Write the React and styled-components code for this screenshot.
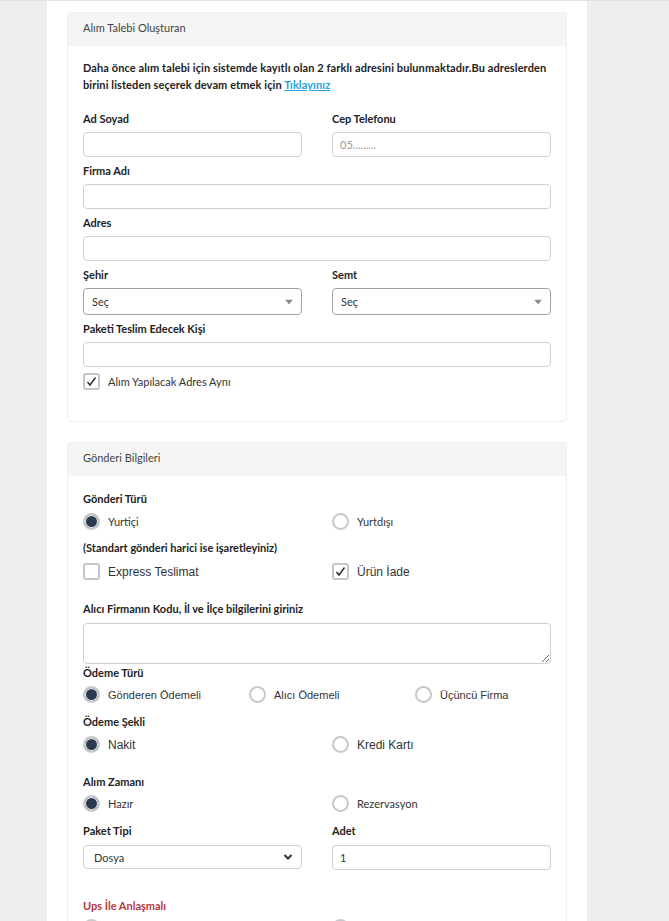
import React from "react";
import styled, { createGlobalStyle } from "styled-components";

const GlobalStyle = createGlobalStyle`
  html, body {
    margin: 0;
    padding: 0;
    overflow: hidden;
    background: #eeeeee;
  }
  body {
    font-family: Lato, "Open Sans", sans-serif;
    color: #333;
  }
  * { box-sizing: border-box; }
`;

const Page = styled.div`
  height: 921px;
  border-top: 1px solid #e2e2e2;
`;

const Column = styled.main`
  width: 540px;
  height: 100%;
  margin-left: 47px;
  background: #fff;
  padding: 11px 20px 0;
`;

const Panel = styled.section`
  border: 1px solid #efefef;
  border-radius: 3px;
  margin-bottom: 20px;
`;

const PanelHeading = styled.div`
  height: 33px;
  line-height: 30px;
  padding: 0 15px 3px;
  background: #f5f5f5;
  font-size: 11px;
  color: #444;
  border-radius: 3px 3px 0 0;
`;

const PanelBody = styled.div`
  padding: ${p => p.$top ?? 14}px 15px ${p => p.$bottom ?? 30}px;
`;

const Intro = styled.p`
  margin: 0 0 17px;
  font-size: 11px;
  font-weight: 700;
  line-height: 17px;
  letter-spacing: 0.1px;
  color: #222;
`;

const Link = styled.a`
  color: #2a9fd6;
  text-decoration: underline;
  cursor: pointer;
`;

const Label = styled.label`
  display: block;
  font-size: 11px;
  font-weight: 700;
  line-height: 18px;
  margin-top: ${p => p.$mt || 0}px;
  margin-bottom: ${p => p.$mb ?? 4}px;
  color: ${p => (p.$red ? "#b5373b" : "#222")};
`;

const Grid = styled.div`
  display: grid;
  grid-template-columns: repeat(${p => p.$cols || 2}, 1fr);
  column-gap: 30px;
`;

const Field = styled.div`
  margin-bottom: ${p => p.$mb ?? 5}px;
`;

const TextInput = styled.input`
  display: block;
  width: 100%;
  height: 25px;
  padding: 0 7px;
  border: 1px solid #cfcfcf;
  border-radius: 4px;
  font-family: Lato, sans-serif;
  font-size: 11px;
  color: #333;
  outline: none;
  &::placeholder { color: #9a9a9a; }
`;

const TextArea = styled.textarea`
  display: block;
  width: 100%;
  height: 41px;
  border: 1px solid #cfcfcf;
  border-radius: 4px;
  outline: none;
  resize: vertical;
`;

const SelectBox = styled.div`
  position: relative;
  height: ${p => (p.$plain ? 24 : 27)}px;
  border: 1px solid ${p => (p.$plain ? "#cfcfcf" : "#a3a3a3")};
  border-radius: 4px;
  padding-left: ${p => (p.$plain ? 10 : 8)}px;
  display: flex;
  align-items: center;
  font-size: 11px;
  color: #333;
`;

const Caret = styled.span`
  position: absolute;
  right: 8px;
  top: 50%;
  transform: translateY(-50%);
  display: flex;
`;

const Option = styled.label`
  display: flex;
  align-items: center;
  gap: 8px;
  height: 17px;
  font-family: ${p => (p.$arial ? '"Liberation Sans", Arial, sans-serif' : "Lato, sans-serif")};
  font-size: ${p => p.$size || 11}px;
  color: #333;
`;

const RadioDot = styled.span`
  flex: none;
  width: 17px;
  height: 17px;
  border-radius: 50%;
  border: 2px solid #c6c8cb;
  background: ${p => (p.$on ? "#2b3a4e" : "#fff")};
  box-shadow: ${p => (p.$on ? "inset 0 0 0 1px #fff" : "none")};
`;

const CheckBox = styled.span`
  flex: none;
  width: 17px;
  height: 17px;
  border-radius: 3px;
  border: 2px solid #c4c6c9;
  background: #fff;
  display: flex;
  align-items: center;
  justify-content: center;
`;

const Tick = () => (
  <svg width="11" height="11" viewBox="0 0 11 11">
    <polyline points="1.5,6 4,9 9.5,1.5" fill="none" stroke="#2b2b2b" strokeWidth="1.5" />
  </svg>
);

const Radio = ({ on, children, ...rest }) => (
  <Option {...rest}>
    <RadioDot $on={on} />
    {children}
  </Option>
);

const Check = ({ on, children, ...rest }) => (
  <Option {...rest}>
    <CheckBox>{on && <Tick />}</CheckBox>
    {children}
  </Option>
);

const Select = ({ value, plain }) => (
  <SelectBox $plain={plain}>
    {value}
    <Caret>
      {plain ? (
        <svg width="10" height="7" viewBox="0 0 10 7">
          <polyline points="1.5,1.5 5,5 8.5,1.5" fill="none" stroke="#333" strokeWidth="2" />
        </svg>
      ) : (
        <svg width="8" height="5" viewBox="0 0 8 5">
          <polygon points="0,0 8,0 4,5" fill="#8a8a8a" />
        </svg>
      )}
    </Caret>
  </SelectBox>
);

export default function App() {
  return (
    <>
      <GlobalStyle />
      <Page>
        <Column>
          <Panel>
            <PanelHeading>Alım Talebi Oluşturan</PanelHeading>
            <PanelBody $top={13} $bottom={31}>
              <Intro>
                Daha önce alım talebi için sistemde kayıtlı olan 2 farklı adresini bulunmaktadır.Bu adreslerden
                birini listeden seçerek devam etmek için <Link>Tıklayınız</Link>
              </Intro>
              <Grid>
                <Field>
                  <Label>Ad Soyad</Label>
                  <TextInput />
                </Field>
                <Field>
                  <Label>Cep Telefonu</Label>
                  <TextInput placeholder="05........." />
                </Field>
              </Grid>
              <Field>
                <Label>Firma Adı</Label>
                <TextInput />
              </Field>
              <Field>
                <Label>Adres</Label>
                <TextInput />
              </Field>
              <Grid>
                <Field>
                  <Label>Şehir</Label>
                  <Select value="Seç" />
                </Field>
                <Field>
                  <Label>Semt</Label>
                  <Select value="Seç" />
                </Field>
              </Grid>
              <Field $mb={6}>
                <Label>Paketi Teslim Edecek Kişi</Label>
                <TextInput />
              </Field>
              <Check on>Alım Yapılacak Adres Aynı</Check>
            </PanelBody>
          </Panel>

          <Panel>
            <PanelHeading>Gönderi Bilgileri</PanelHeading>
            <PanelBody>
              <Label $mb={5}>Gönderi Türü</Label>
              <Grid>
                <Radio on>Yurtiçi</Radio>
                <Radio>Yurtdışı</Radio>
              </Grid>

              <Label $mt={9} $mb={6}>(Standart gönderi harici ise işaretleyiniz)</Label>
              <Grid>
                <Check $arial $size={12}>Express Teslimat</Check>
                <Check on $arial $size={12}>Ürün İade</Check>
              </Grid>

              <Label $mt={20} $mb={5}>Alıcı Firmanın Kodu, İl ve İlçe bilgilerini giriniz</Label>
              <TextArea />

              <Label $mb={4}>Ödeme Türü</Label>
              <Grid $cols={3}>
                <Radio on $arial>Gönderen Ödemeli</Radio>
                <Radio $arial>Alıcı Ödemeli</Radio>
                <Radio $arial>Üçüncü Firma</Radio>
              </Grid>

              <Label $mt={10} $mb={5}>Ödeme Şekli</Label>
              <Grid>
                <Radio on $arial $size={12}>Nakit</Radio>
                <Radio $arial $size={12}>Kredi Kartı</Radio>
              </Grid>

              <Label $mt={20} $mb={4}>Alım Zamanı</Label>
              <Grid>
                <Radio on>Hazır</Radio>
                <Radio>Rezervasyon</Radio>
              </Grid>

              <Grid>
                <Field $mb={0}>
                  <Label $mt={10} $mb={5}>Paket Tipi</Label>
                  <Select value="Dosya" plain />
                </Field>
                <Field $mb={0}>
                  <Label $mt={10} $mb={5}>Adet</Label>
                  <TextInput defaultValue="1" />
                </Field>
              </Grid>

              <Label $mt={27} $mb={4} $red>Ups İle Anlaşmalı</Label>
              <Grid>
                <Radio on>Evet</Radio>
                <Radio>Hayır</Radio>
              </Grid>
            </PanelBody>
          </Panel>
        </Column>
      </Page>
    </>
  );
}
